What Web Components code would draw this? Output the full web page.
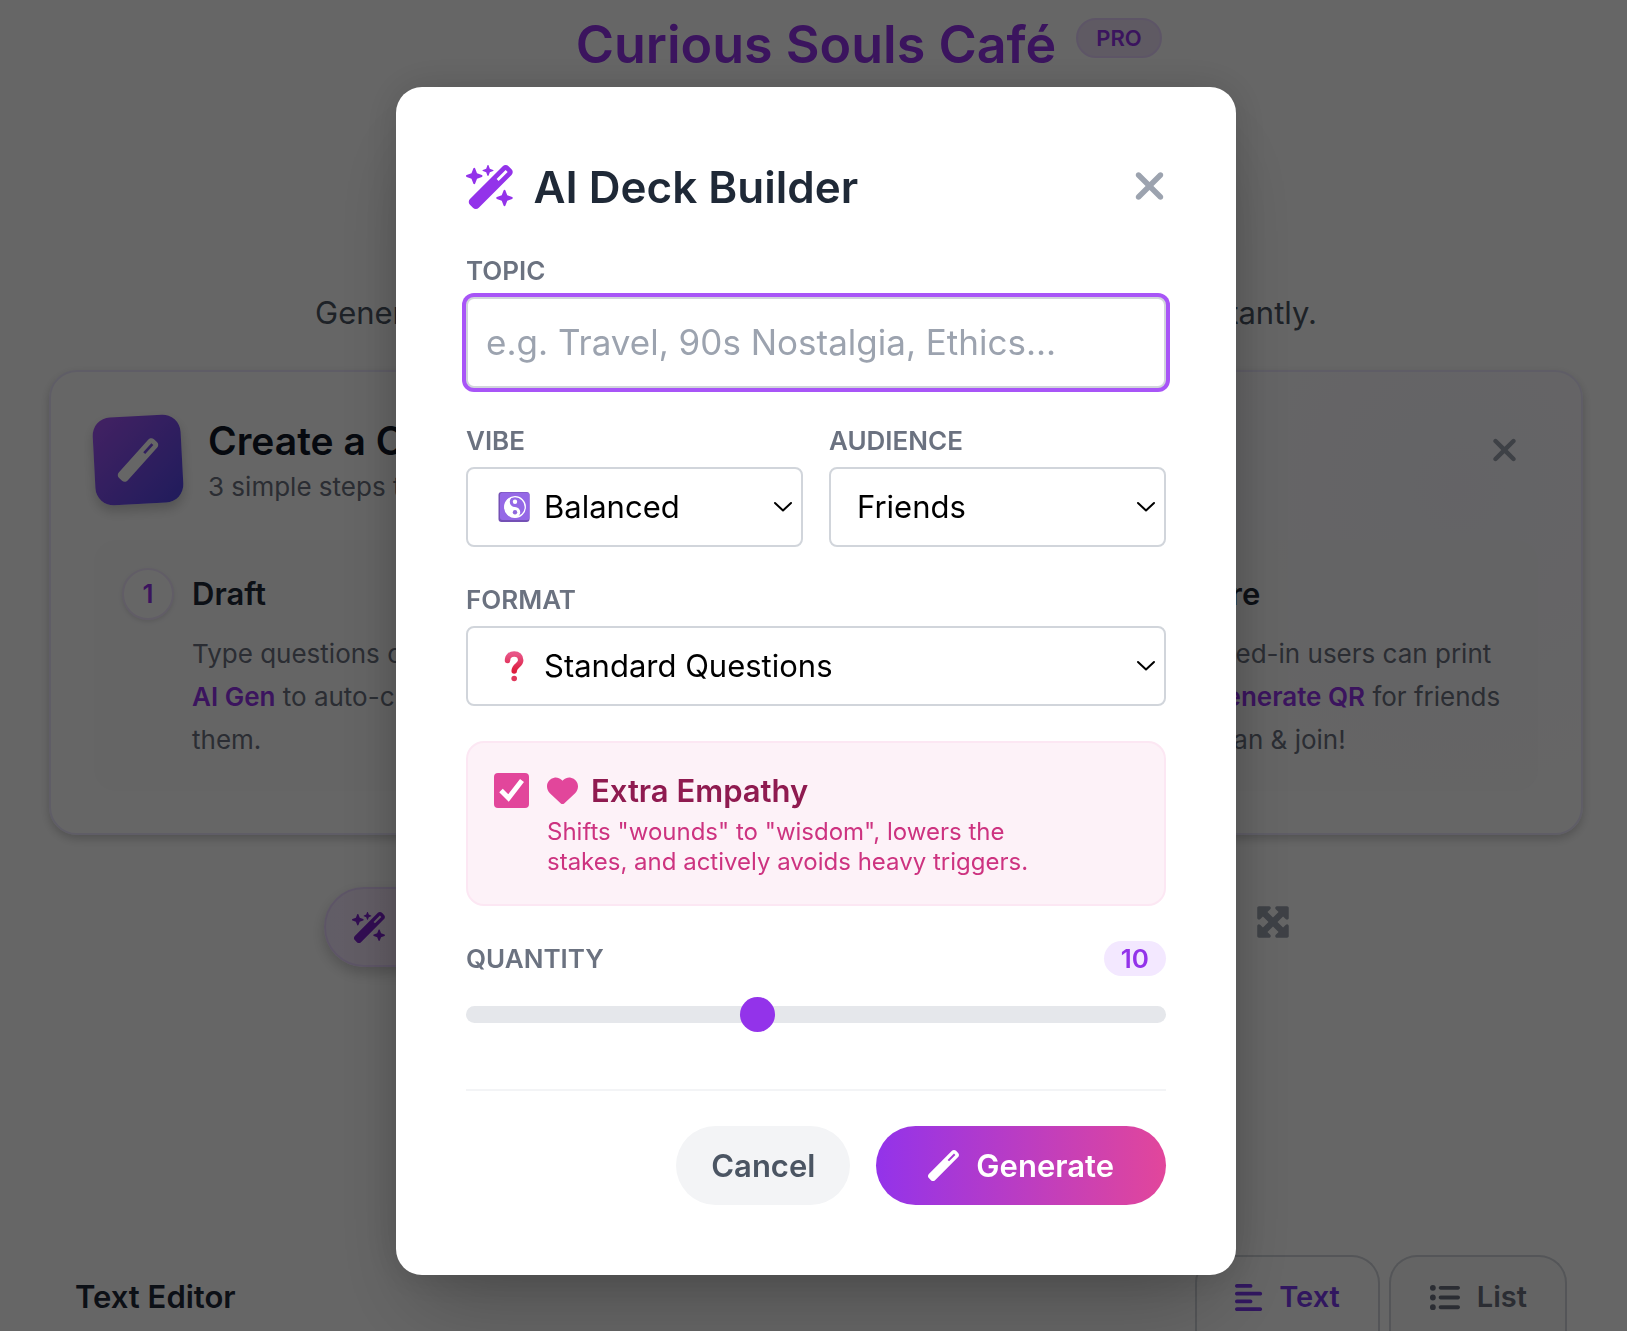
<!DOCTYPE html>
<html lang="en">
<head>
	<meta charset="utf-8">
	<title>Curious Souls Café</title>
	<meta name="viewport" content="width=device-width">
</head>
<style type="text/css">
html, body {
	margin:0;
	height:100%;
}
body {
	font-family:Inter, 'Liberation Sans', sans-serif;
	font-size:26px;
	color:#1f2937;
	background:#fff;
	overflow:hidden; /* scroll is locked while the dialog is open */
	--purple:#9333ea;
	--pink:#e2469b;
	--grey:#6b7280;
}
</style>
<body>

<deck-page>
	<page-header>
		Curious Souls Café
		<span slot="badge">PRO</span>
		<span slot="tagline">Generate, customize and edit your own conversation cards instantly.</span>
	</page-header>
	<guide-card heading="Create a Card" sub="3 simple steps to go">
		<guide-step number="1" heading="Draft">Type questions or use<br><b>AI Gen</b> to auto-create<br>them.</guide-step>
		<guide-step number="2" heading="Design">Pick a style and<br>preview <b>Your Cards</b><br>live.</guide-step>
		<guide-step number="3" heading="Share">Logged-in users can print<br>or <b>Generate QR</b> for friends<br>to scan &amp; join!</guide-step>
	</guide-card>
	<deck-toolbar></deck-toolbar>
	<editor-tabs></editor-tabs>
</deck-page>

<modal-dialog heading="AI Deck Builder">
	<text-field label="TOPIC" placeholder="e.g. Travel, 90s Nostalgia, Ethics..."></text-field>
	<field-row>
		<select-field label="VIBE" icon="yinyang"><option>Balanced</option><option>Deep</option><option>Playful</option></select-field>
		<select-field label="AUDIENCE"><option>Friends</option><option>Family</option><option>Couples</option></select-field>
	</field-row>
	<select-field label="FORMAT" icon="question"><option>Standard Questions</option><option>Would You Rather</option></select-field>
	<check-card heading="Extra Empathy">Shifts "wounds" to "wisdom", lowers the stakes, and actively avoids heavy triggers.</check-card>
	<range-field label="QUANTITY" min="3" max="20" value="10"></range-field>
	<action-button slot="actions">Cancel</action-button>
	<action-button slot="actions" primary icon="wand">Generate</action-button>
</modal-dialog>

<script type="text/javascript">

	const icons = {
		sparkles: ['0 0 576 512', '<path d="M234.7 42.7L197 56.8c-3 1.1-5 4-5 7.2s2 6.1 5 7.2l37.7 14.1L248.8 123c1.1 3 4 5 7.2 5s6.1-2 7.2-5l14.1-37.7L315 71.2c3-1.1 5-4 5-7.2s-2-6.1-5-7.2L277.3 42.7 263.2 5c-1.1-3-4-5-7.2-5s-6.1 2-7.2 5L234.7 42.7zM46.1 395.4c-18.7 18.7-18.7 49.1 0 67.9l34.6 34.6c18.7 18.7 49.1 18.7 67.9 0L529.9 116.5c18.7-18.7 18.7-49.1 0-67.9L495.3 14.1c-18.7-18.7-49.1-18.7-67.9 0L46.1 395.4zM484.6 82.6l-105 105-23.3-23.3 105-105 23.3 23.3zM7.5 117.2C3 118.9 0 123.2 0 128s3 9.1 7.5 10.8L64 160l21.2 56.5c1.7 4.5 6 7.5 10.8 7.5s9.1-3 10.8-7.5L128 160l56.5-21.2c4.5-1.7 7.5-6 7.5-10.8s-3-9.1-7.5-10.8L128 96 106.8 39.5C105.1 35 100.8 32 96 32s-9.1 3-10.8 7.5L64 96 7.5 117.2zm352 256c-4.5 1.7-7.5 6-7.5 10.8s3 9.1 7.5 10.8L416 416l21.2 56.5c1.7 4.5 6 7.5 10.8 7.5s9.1-3 10.8-7.5L480 416l56.5-21.2c4.5-1.7 7.5-6 7.5-10.8s-3-9.1-7.5-10.8L480 352l-21.2-56.5c-1.7-4.5-6-7.5-10.8-7.5s-9.1 3-10.8 7.5L416 352l-56.5 21.2z"/>'],
		wand: ['0 0 512 512', '<path d="M14.1 463.3c-18.7-18.7-18.7-49.1 0-67.9L395.4 14.1c18.7-18.7 49.1-18.7 67.9 0l34.6 34.6c18.7 18.7 18.7 49.1 0 67.9L116.5 497.9c-18.7 18.7-49.1 18.7-67.9 0L14.1 463.3zM347.6 187.6l105-105L429.4 59.3l-105 105 23.3 23.3z"/>'],
		close: ['0 0 384 512', '<path d="M342.6 150.6c12.5-12.5 12.5-32.8 0-45.3s-32.8-12.5-45.3 0L192 210.7 86.6 105.4c-12.5-12.5-32.8-12.5-45.3 0s-12.5 32.8 0 45.3L146.7 256 41.4 361.4c-12.5 12.5-12.5 32.8 0 45.3s32.8 12.5 45.3 0L192 301.3 297.4 406.6c12.5 12.5 32.8 12.5 45.3 0s12.5-32.8 0-45.3L237.3 256 342.6 150.6z"/>'],
		heart: ['0 0 512 512', '<path d="M47.6 300.4L228.3 469.1c7.5 7 17.4 10.9 27.7 10.9s20.2-3.9 27.7-10.9L464.4 300.4c30.4-28.3 47.6-68 47.6-109.5v-5.8c0-69.9-50.5-129.5-119.4-141C347 36.5 300.6 51.4 268 84L256 96 244 84c-32.6-32.6-79-47.5-124.6-39.9C50.5 55.6 0 115.2 0 185.1v5.8c0 41.5 17.2 81.2 47.6 109.5z"/>'],
		expand: ['0 0 512 512', '<path d="M200 32H56C42.7 32 32 42.7 32 56V200c0 9.7 5.8 18.5 14.8 22.2s19.3 1.7 26.2-5.2l40-40 79 79-79 79L73 295c-6.9-6.9-17.2-8.9-26.2-5.2S32 302.3 32 312V456c0 13.3 10.7 24 24 24H200c9.7 0 18.5-5.8 22.2-14.8s1.7-19.3-5.2-26.2l-40-40 79-79 79 79-40 40c-6.9 6.9-8.9 17.2-5.2 26.2s12.5 14.8 22.2 14.8H456c13.3 0 24-10.7 24-24V312c0-9.7-5.8-18.5-14.8-22.2s-19.3-1.7-26.2 5.2l-40 40-79-79 79-79 40 40c6.9 6.9 17.2 8.9 26.2 5.2s14.8-12.5 14.8-22.2V56c0-13.3-10.7-24-24-24H312c-9.7 0-18.5 5.8-22.2 14.8s-1.7 19.3 5.2 26.2l40 40-79 79-79-79 40-40c6.9-6.9 8.9-17.2 5.2-26.2S209.7 32 200 32z"/>'],
		align: ['0 0 448 512', '<path d="M288 64c0 17.7-14.3 32-32 32H32C14.3 96 0 81.7 0 64s14.3-32 32-32H256c17.7 0 32 14.3 32 32zm0 256c0 17.7-14.3 32-32 32H32c-17.7 0-32-14.3-32-32s14.3-32 32-32H256c17.7 0 32 14.3 32 32zM0 192c0-17.7 14.3-32 32-32H416c17.7 0 32 14.3 32 32s-14.3 32-32 32H32c-17.7 0-32-14.3-32-32zM448 448c0 17.7-14.3 32-32 32H32c-17.7 0-32-14.3-32-32s14.3-32 32-32H416c17.7 0 32 14.3 32 32z"/>'],
		list: ['0 0 512 512', '<path d="M64 144a48 48 0 1 0 0-96 48 48 0 1 0 0 96zM192 64c-17.7 0-32 14.3-32 32s14.3 32 32 32H480c17.7 0 32-14.3 32-32s-14.3-32-32-32H192zm0 160c-17.7 0-32 14.3-32 32s14.3 32 32 32H480c17.7 0 32-14.3 32-32s-14.3-32-32-32H192zm0 160c-17.7 0-32 14.3-32 32s14.3 32 32 32H480c17.7 0 32-14.3 32-32s-14.3-32-32-32H192zM64 464a48 48 0 1 0 0-96 48 48 0 1 0 0 96zm48-208a48 48 0 1 0 -96 0 48 48 0 1 0 96 0z"/>'],
		chevron: ['0 0 20 12', '<path d="M2 2l8 7.500 8-7.500" fill="none" stroke="#000" stroke-width="2" stroke-linecap="round" stroke-linejoin="round"/>'],
		tick: ['0 0 35 35', '<path d="M7 17.500l7.500 7.500L28 7.500" fill="none" stroke="#fff" stroke-width="5"/>'],
		yinyang: ['0 0 32 32', '<rect x=".5" y="1" width="31" height="30" rx="3" fill="#7450b5"/><rect x="2" y="1.500" width="29.500" height="27.500" rx="2.500" fill="#9568e6"/><circle cx="17" cy="16" r="10.300" fill="none" stroke="#fff" stroke-width="1.300"/><path d="M17 5.500a10.500 10.500 0 0 0 0 21a5.250 5.250 0 0 0 0-10.500a5.250 5.250 0 0 1 0-10.500z" fill="#fff"/><circle cx="17" cy="10.800" r="2.200" fill="#fff"/><circle cx="17" cy="21.200" r="2.200" fill="#9067de"/>'],
		question: ['0 0 32 32', '<defs><linearGradient id="q" x1="0" y1="0" x2="0" y2="1"><stop offset="0" stop-color="#e85588"/><stop offset="1" stop-color="#dd1c3c"/></linearGradient></defs><path d="M9.500 10.500C9.500 5.800 12.500 4 16.200 4s6.500 2.300 6.500 6.200c0 5-6.500 5.300-6.500 10.800" fill="none" stroke="url(#q)" stroke-width="5.500" stroke-linecap="round"/><circle cx="16.200" cy="28.500" r="2.800" fill="#e0385c"/>']
	}

	// shared base: fills an open shadow root from render() as soon as the element is in the page
	class Base extends HTMLElement {
		connectedCallback() {
			if (this.shadowRoot) return
			this.attachShadow({mode:'open'}).innerHTML = '<style>* { box-sizing:border-box } ' + this.css() + '</style>' + this.render()
			this.ready()
		}
		attr(name) { return this.getAttribute(name) || '' }
		css() { return '' }
		render() { return '<slot></slot>' }
		ready() {}
	}

	const labelCss = `
		label { display:block; font-size:26px; font-weight:600; line-height:36px; color:var(--grey); }
	`

	customElements.define('ui-icon', class extends Base {
		css() { return `
			:host { display:inline-flex; height:31px; flex:none; }
			svg { display:block; height:100%; fill:currentColor; overflow:visible; }
		` }
		render() {
			let icon = icons[this.attr('name')]
			return `<svg viewBox="${icon[0]}" aria-hidden="true">${icon[1]}</svg>`
		}
	})

	customElements.define('deck-page', class extends Base {
		css() { return `
			:host { display:flex; flex-direction:column; padding:0 44px 0 49px; }
		` }
	})

	customElements.define('page-header', class extends Base {
		css() { return `
			:host { display:block; }
			.top { display:grid; grid-template-columns:1fr auto 1fr; column-gap:20px; height:90px; }
			h1 { grid-column:2; margin:0; font-size:52px; line-height:90px; font-weight:600; color:var(--purple); }
			.badge { justify-self:start; margin-top:18px; height:40px; padding:0 18px; border:2px solid #e9d5ff; border-radius:20px; background:#ede0f8; font-size:22px; line-height:36px; font-weight:600; color:var(--purple); }
			p { margin:0; padding-top:200px; padding-bottom:34px; text-align:center; font-size:31px; line-height:46px; color:#4b5563; }
		` }
		render() { return `
			<div class="top"><h1><slot></slot></h1><span class="badge"><slot name="badge"></slot></span></div>
			<p><slot name="tagline"></slot></p>
		` }
	})

	customElements.define('guide-card', class extends Base {
		css() { return `
			:host { display:block; padding:42px 43px; border:2px solid #ede9fe; border-radius:28px; background:radial-gradient(circle at 92% 25%, #faf8ff 0, #fff 24%); box-shadow:0 4px 10px rgba(0,0,0,.2); }
			header { display:flex; align-items:center; gap:26px; height:92px; }
			.tile { display:grid; place-items:center; width:88px; height:88px; border-radius:18px; background:linear-gradient(135deg,#a855f7,#4f46e5); color:#fff; transform:rotate(-3deg); box-shadow:0 6px 12px rgba(0,0,0,.2); }
			.tile ui-icon { height:42px; }
			h2 { margin:0; font-size:39px; line-height:54px; font-weight:600; color:#111827; }
			p { margin:0; line-height:38px; color:var(--grey); }
			button { margin:0 20px 18px auto; padding:0; border:0; background:none; color:#9ca3af; }
			button ui-icon { height:36px; }
			.steps { display:grid; grid-template-columns:repeat(3, 1fr); column-gap:84px; margin-top:34px; padding:28px 28px 30px; border-radius:22px; background:rgba(249,250,251,.5); }
		` }
		render() { return `
			<header>
				<span class="tile"><ui-icon name="wand"></ui-icon></span>
				<div><h2>${this.attr('heading')}</h2><p>${this.attr('sub')}</p></div>
				<button aria-label="Hide guide"><ui-icon name="close"></ui-icon></button>
			</header>
			<div class="steps"><slot></slot></div>
		` }
	})

	customElements.define('guide-step', class extends Base {
		css() { return `
			:host { display:grid; grid-template-columns:52px 1fr; column-gap:18px; row-gap:12px; }
			.number { height:52px; border:2px solid #f3e8ff; border-radius:50%; background:#fff; box-shadow:0 2px 4px rgba(0,0,0,.1); text-align:center; line-height:48px; font-weight:600; color:var(--purple); }
			h3 { margin:0; font-size:31px; line-height:52px; font-weight:600; }
			p { grid-column:2; margin:0; line-height:43px; color:var(--grey); white-space:nowrap; }
			::slotted(b) { font-weight:600; color:var(--purple); }
		` }
		render() { return `
			<span class="number">${this.attr('number')}</span>
			<h3>${this.attr('heading')}</h3>
			<p><slot></slot></p>
		` }
	})

	customElements.define('deck-toolbar', class extends Base {
		css() { return `
			:host { display:flex; align-items:center; justify-content:space-between; width:100%; max-width:984px; margin:52px auto 0; }
			button { font:inherit; }
			.gen { display:flex; align-items:center; gap:14px; height:80px; padding:0 26px; border:2px solid #e9d5ff; border-radius:40px; background:linear-gradient(90deg,#f3e8ff,#fce7f3); box-shadow:0 6px 14px rgba(0,0,0,.2); font-weight:600; color:#7e22ce; }
			.expand { padding:0 17px 4px; border:0; background:none; color:#9ca3af; }
			.expand ui-icon { height:36px; }
		` }
		render() { return `
			<button class="gen"><ui-icon name="sparkles"></ui-icon>AI Gen</button>
			<button class="expand" aria-label="Full screen"><ui-icon name="expand"></ui-icon></button>
		` }
	})

	customElements.define('editor-tabs', class extends Base {
		css() { return `
			:host { display:flex; align-items:flex-start; gap:9px; margin-top:288px; padding:0 16px 0 26px; }
			h2 { flex:1; margin:0; font-size:31px; line-height:84px; font-weight:600; }
			button { display:flex; align-items:center; gap:17px; height:100px; padding:0 38px 18px; border:2px solid #d1d5db; border-bottom:0; border-radius:28px 28px 0 0; background:#fafafa; font:600 29px/40px Inter, sans-serif; color:var(--grey); }
			button.on { background:#fff; color:#7c3aed; }
		` }
		render() { return `
			<h2>Text Editor</h2>
			<button class="on"><ui-icon name="align"></ui-icon>Text</button>
			<button><ui-icon name="list"></ui-icon>List</button>
		` }
	})

	customElements.define('modal-dialog', class extends Base {
		css() { return `
			:host { position:fixed; inset:0; display:flex; align-items:center; justify-content:center; padding:30px 0 0 5px; background:rgba(0,0,0,.6); box-sizing:border-box; }
			section { display:flex; flex-direction:column; gap:35px; width:840px; max-width:92%; padding:70px; border-radius:26px; background:#fff; box-shadow:0 44px 88px -20px rgba(0,0,0,.25), 0 0 40px rgba(0,0,0,.15); }
			header { display:flex; align-items:center; gap:18px; height:61px; color:var(--purple); }
			header ui-icon { height:44px; }
			h2 { flex:1; margin:0; font-size:44px; line-height:60px; font-weight:600; color:#1f2937; }
			header button { padding:0; border:0; background:none; color:#9ca3af; }
			footer { display:flex; justify-content:flex-end; gap:26px; margin-top:22px; padding-top:35px; border-top:2px solid #f3f4f6; }
		` }
		render() { return `
			<section role="dialog" aria-modal="true" aria-label="${this.attr('heading')}">
				<header>
					<ui-icon name="sparkles"></ui-icon>
					<h2>${this.attr('heading')}</h2>
					<button aria-label="Close"><ui-icon name="close"></ui-icon></button>
				</header>
				<slot></slot>
				<footer><slot name="actions"></slot></footer>
			</section>
		` }
	})

	customElements.define('field-row', class extends Base {
		css() { return `
			:host { display:grid; grid-template-columns:1fr 1fr; gap:26px; }
		` }
	})

	customElements.define('text-field', class extends Base {
		css() { return labelCss + `
			:host { display:block; }
			input { display:block; width:100%; height:91px; margin-top:8px; padding:0 18px; border:2px solid #d1d5db; border-radius:8px; outline:none; box-shadow:0 0 0 4px #a855f7; font:35px Inter, sans-serif; color:#1f2937; }
			input::placeholder { color:#9ca3af; opacity:1; }
		` }
		render() { return `
			<label for="field">${this.attr('label')}</label>
			<input id="field" type="text" placeholder="${this.attr('placeholder')}">
		` }
	})

	customElements.define('select-field', class extends Base {
		css() { return labelCss + `
			:host { display:block; }
			.box { display:grid; align-items:center; margin-top:8px; }
			.box > * { grid-area:1 / 1; }
			select { appearance:none; width:100%; height:80px; padding:0 26px; border:2px solid #d1d5db; border-radius:8px; background:#fff; font:31px Inter, sans-serif; color:#000; }
			.with-icon select { padding-left:76px; }
			ui-icon { pointer-events:none; }
			.lead { height:32px; margin-left:32px; }
			.arrow { justify-self:end; height:12px; margin-right:10px; }
		` }
		render() {
			let icon = this.attr('icon')
			return `
			<label for="field">${this.attr('label')}</label>
			<div class="box ${icon ? 'with-icon' : ''}">
				<select id="field"></select>
				${icon ? `<ui-icon class="lead" name="${icon}"></ui-icon>` : ''}
				<ui-icon class="arrow" name="chevron"></ui-icon>
			</div>`
		}
		ready() {
			this.shadowRoot.querySelector('select').append(...this.querySelectorAll('option'))
		}
	})

	customElements.define('check-card', class extends Base {
		css() { return `
			:host { display:grid; grid-template-columns:35px 1fr; column-gap:18px; padding:26px 26px 27px; border:2px solid #fce7f3; border-radius:18px; background:#fdf2f8; box-sizing:border-box; }
			.box { display:grid; height:35px; margin-top:4px; }
			.box > * { grid-area:1 / 1; }
			input { appearance:none; width:35px; height:35px; margin:0; border-radius:4px; }
			input:checked { background:var(--pink); }
			.box ui-icon { height:35px; pointer-events:none; }
			input:not(:checked) { border:2px solid #d1d5db; }
			label { display:flex; align-items:center; gap:13px; font-size:31px; line-height:44px; font-weight:600; color:#8f1b50; }
			label ui-icon { color:var(--pink); }
			p { grid-column:2; max-width:500px; margin:4px 0 0; font-size:24px; line-height:30px; color:#cd3380; }
		` }
		render() { return `
			<span class="box"><input id="field" type="checkbox" checked><ui-icon name="tick"></ui-icon></span>
			<label for="field"><ui-icon name="heart"></ui-icon>${this.attr('heading')}</label>
			<p><slot></slot></p>
		` }
	})

	customElements.define('range-field', class extends Base {
		css() { return labelCss + `
			:host { display:block; }
			.top { display:flex; align-items:center; justify-content:space-between; height:36px; }
			output { padding:0 17px; border-radius:18px; background:#f3e8ff; font-size:26px; line-height:35px; font-weight:600; color:var(--purple); }
			input { appearance:none; display:block; width:100%; height:35px; margin:20px 0 0; background:none; }
			input::-webkit-slider-runnable-track { height:17px; border-radius:9px; background:#e5e7eb; }
			input::-webkit-slider-thumb { appearance:none; width:35px; height:35px; margin-top:-9px; border-radius:50%; background:var(--purple); }
		` }
		render() { return `
			<div class="top"><label for="field">${this.attr('label')}</label><output for="field">${this.attr('value')}</output></div>
			<input id="field" type="range" min="${this.attr('min')}" max="${this.attr('max')}" value="${this.attr('value')}">
		` }
		ready() {
			let input = this.shadowRoot.querySelector('input')
			let output = this.shadowRoot.querySelector('output')
			input.oninput = () => output.textContent = input.value
		}
	})

	customElements.define('action-button', class extends Base {
		css() { return `
			:host { display:block; }
			button { display:flex; align-items:center; gap:17px; height:79px; padding:0 35px; border:0; border-radius:40px; background:#f3f4f6; font:600 31px Inter, sans-serif; color:#4b5563; }
			:host([primary]) button { padding:0 52px; background:linear-gradient(90deg,var(--purple),var(--pink)); color:#fff; }
		` }
		render() {
			let icon = this.attr('icon')
			return `<button>${icon ? `<ui-icon name="${icon}"></ui-icon>` : ''}<span><slot></slot></span></button>`
		}
	})

</script>
</body>
</html>
